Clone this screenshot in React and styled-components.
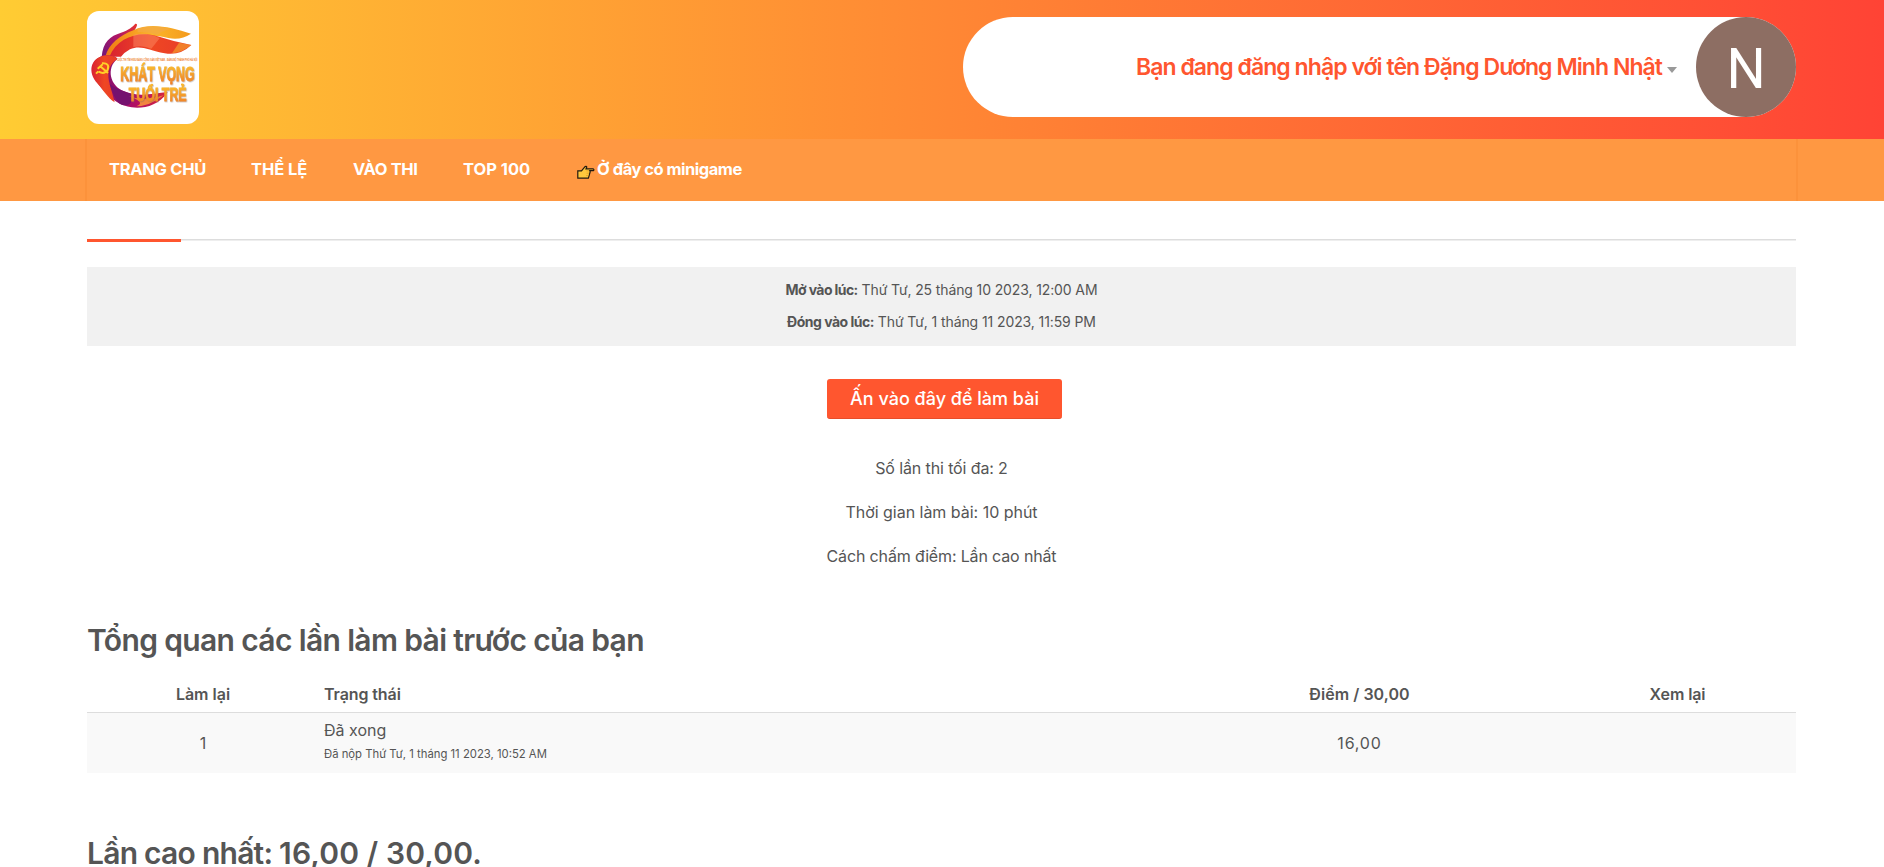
import React from "react";
import styled, { createGlobalStyle } from "styled-components";

const GlobalStyle = createGlobalStyle`
  * { box-sizing: border-box; }
  body {
    margin: 0;
    height: 867px;
    overflow: hidden;
    background: #fff;
    color: #555;
    font-family: Inter, "Open Sans", sans-serif;
    font-size: 16px;
  }
`;

const Header = styled.header`
  height: 139px;
  padding: 11px 88px 0 87px;
  display: flex;
  justify-content: space-between;
  align-items: flex-start;
  background: linear-gradient(90deg, #ffcc33, #ff4335);
`;

const LogoBox = styled.a`
  width: 112px;
  height: 113px;
  border-radius: 12px;
  background: #fff;
  svg { display: block; overflow: visible; }
`;

const UserPill = styled.div`
  width: 833px;
  height: 100px;
  margin-top: 6px;
  border-radius: 50px;
  background: #fff;
  display: flex;
  align-items: center;
  justify-content: flex-end;
`;

const UserName = styled.span`
  color: #ff562f;
  font-size: 23px;
  font-weight: 600;
  white-space: nowrap;
`;

const Caret = styled.span`
  margin: 6px 19px 0 5px;
  border: 5px solid transparent;
  border-top: 6px solid #999;
  border-bottom: 0;
`;

const Avatar = styled.div`
  width: 100px;
  height: 100px;
  border-radius: 50%;
  background: #8d6e63;
  color: #fff;
  font: 400 55px/104px Roboto, sans-serif;
  text-align: center;
`;

const Nav = styled.nav`
  height: 62px;
  padding: 0 86px 0 85px;
  background: #ff9842;
`;

const NavInner = styled.div`
  height: 100%;
  padding: 0 22px;
  display: flex;
  gap: 45px;
  border: solid #fc923b;
  border-width: 0 2px;
`;

const NavLink = styled.a`
  display: flex;
  color: #fff;
  font-size: 16.5px;
  font-weight: 700;
  line-height: 61px;
  white-space: nowrap;
  width: ${(p) => p.$width}px;
  letter-spacing: ${(p) => p.$track || 0}px;
  svg { flex: none; margin: 26px 2px 0 0; }
`;

const Main = styled.main`
  margin: 38px 88px 0 87px;
`;

const TabLine = styled.div`
  height: 3px;
  border-top: 1px solid #ddd;
  box-shadow: inset 0 1px #eee;
`;

const TabActive = styled.div`
  width: 94px;
  height: 3px;
  margin-top: -1px;
  background: #ff562f;
  position: relative;
`;

const Dates = styled.div`
  height: 79px;
  margin-top: 25px;
  padding-top: 7px;
  background: #f1f1f1;
  font-size: 14px;
  line-height: 32px;
  text-align: center;
`;

const Track = styled.span`
  letter-spacing: ${(p) => p.$by}px;
`;

const Label = styled.b`
  font-weight: 700;
  letter-spacing: ${(p) => p.$by}px;
`;

const StartButton = styled.button`
  display: block;
  width: 235px;
  height: 40px;
  margin: 33px 0 0 740px;
  padding: 0;
  border: 0;
  border-bottom: 1px solid #e64d2a;
  border-radius: 3px;
  background: #ff562f;
  color: #fff;
  font: 500 18px/39px Inter, sans-serif;
`;

const Facts = styled.div`
  margin-top: 27px;
  text-align: center;
  line-height: 44px;
`;

const Heading = styled.h3`
  margin: ${(p) => p.$top}px 0 0;
  font-size: 30px;
  font-weight: 600;
  line-height: 40px;
  white-space: nowrap;
`;

const Table = styled.div`
  margin-top: 17px;
`;

const TableRow = styled.div`
  display: grid;
  grid-template-columns: 232px 805px 471px 165px;
  align-items: center;
  height: ${(p) => (p.$head ? 36 : 60)}px;
  padding-bottom: ${(p) => (p.$head ? 2 : 0)}px;
  font-weight: ${(p) => (p.$head ? 600 : 400)};
  background: ${(p) => (p.$head ? "none" : "#f9f9f9")};
  border-bottom: ${(p) => (p.$head ? "1px solid #ddd" : "0")};
`;

const Cell = styled.div`
  text-align: ${(p) => p.$align || "center"};
  padding-left: ${(p) => (p.$align ? 5 : 0)}px;
`;

const State = styled.div`
  line-height: 22px;
`;

const Submitted = styled.div`
  font-size: 11.3px;
  line-height: 26px;
`;

const Pointer = () => (
  <svg width="18" height="15" viewBox="0 0 18 15">
    <path
      d="M.8 5.8H4.5L8 1.6Q9.5.8 9.8 2L9 3.9h7.3q1.3.8 0 1.8h-3.6l.5 1-.8 3-1 3.4H.8z"
      fill="#ffc83d"
      stroke="#221a10"
      strokeWidth="1.2"
    />
    <path d="M9.3 5.8h3M9.5 8.2h2.6M9 10.6h2.4" stroke="#e19b24" strokeWidth=".7" />
  </svg>
);

const Logo = () => (
  <svg width="112" height="113" viewBox="51 33 336 339">
    <defs>
      <linearGradient id="feather" x1="0" y1="1" x2="1" y2="0">
        <stop offset="0.1" stopColor="#7b1877" />
        <stop offset="0.55" stopColor="#b01765" />
        <stop offset="1" stopColor="#e9352b" />
      </linearGradient>
      <linearGradient id="gold" x1="0" x2="1">
        <stop offset="0" stopColor="#f07a13" />
        <stop offset="0.55" stopColor="#fbb62a" />
        <stop offset="1" stopColor="#f49a1c" />
      </linearGradient>
      <linearGradient id="wing" x1="0" x2="1">
        <stop offset="0" stopColor="#d92231" />
        <stop offset="0.5" stopColor="#ef4723" />
        <stop offset="1" stopColor="#e83b29" />
      </linearGradient>
      <linearGradient id="base" x1="0" x2="1">
        <stop offset="0" stopColor="#75116f" />
        <stop offset="0.5" stopColor="#ab0d69" />
        <stop offset="1" stopColor="#d8263c" />
      </linearGradient>
      <linearGradient id="letters" x1="0" y1="0" x2="0" y2="1">
        <stop offset="0.2" stopColor="#f9b52c" />
        <stop offset="1" stopColor="#ee7b28" />
      </linearGradient>
    </defs>
    <path d="M95 170C99 126 120 108 153 98C177 90 187 81 196 71Q205 70 198 83C190 101 163 116 145 129Q122 148 112 170Z" fill="url(#feather)" />
    <path d="M106 170C116 132 150 106 190 91C240 66 303 82 363 101Q332 122 295 114C228 98 176 107 132 170Z" fill="url(#gold)" />
    <path d="M203 86Q250 70 303 88Q278 91 261 105Q229 94 203 97Z" fill="#f3a943" opacity=".75" />
    <path d="M118 170C142 112 206 92 260 108Q309 124 364 135Q330 168 284 160C235 150 211 134 180 148Q162 158 153 170Z" fill="url(#wing)" />
    <path d="M190 104Q235 95 269 115L244 146Q218 134 190 141Z" fill="#ff9a72" opacity=".4" />
    <path d="M327 128L364 135Q337 158 306 160Z" fill="#f6a12b" opacity=".65" />
    <path d="M106 166Q137 166 142 177C108 204 119 258 163 274C203 292 248 281 293 276C265 319 220 326 185 322C152 318 122 297 100 270C53 220 57 177 106 166Z" fill="url(#base)" />
    <path d="M106 166Q137 166 142 177C112 196 112 225 119 252L134 307C112 292 103 274 83 251C51 217 61 173 106 166Z" fill="url(#wing)" />
    <path d="M119 252Q140 268 185 282Q190 322 157 315Q136 309 119 252Z" fill="#75116f" />
    <path d="M175 288Q218 305 281 286Q238 319 199 319Q230 307 175 288Z" fill="#ffa037" opacity=".8" />
    <path d="M96 190Q120 188 113 209Q103 225 86 215M78 221L85 214M90 198L114 219M83 206L98 193" fill="none" stroke="#ffcf28" strokeWidth="6" />
    <g fontFamily="Liberation Sans, sans-serif" fontWeight="700">
      <text x="140" y="184" fontSize="8" textLength="242" lengthAdjust="spacingAndGlyphs" fill="#ee7b28">
        CUỘC THI TÌM HIỂU ĐẢNG CỘNG SẢN VIỆT NAM - ĐẢNG BỘ THÀNH PHỐ HÀ NỘI
      </text>
      <g fill="url(#letters)" stroke="url(#letters)" strokeWidth="2.5" filter="drop-shadow(2px 2px 0 rgba(119,103,99,.45))">
        <text x="151" y="243" fontSize="58" textLength="223" lengthAdjust="spacingAndGlyphs">KHÁT VỌNG</text>
        <text x="176" y="302" fontSize="55" textLength="174" lengthAdjust="spacingAndGlyphs">TUỔI TRẺ</text>
      </g>
    </g>
  </svg>
);

export default function App() {
  return (
    <>
      <GlobalStyle />
      <Header>
        <LogoBox><Logo /></LogoBox>
        <UserPill>
          <UserName><Track $by={-0.94}>Bạn đang đăng nhập với tên Đặng Dương Minh Nhật</Track></UserName>
          <Caret />
          <Avatar>N</Avatar>
        </UserPill>
      </Header>
      <Nav>
        <NavInner>
          <NavLink $width={97} $track={-0.3}>TRANG CHỦ</NavLink>
          <NavLink $width={57} $track={-0.05}>THỂ LỆ</NavLink>
          <NavLink $width={65} $track={-0.4}>VÀO THI</NavLink>
          <NavLink $width={69} $track={0}>TOP 100</NavLink>
          <NavLink $width={166} $track={-0.5}><Pointer />Ở đây có minigame</NavLink>
        </NavInner>
      </Nav>
      <Main>
        <TabLine><TabActive /></TabLine>
        <Dates>
          <div><Label $by={-0.6}>Mở vào lúc:</Label> <Track $by={-0.12}>Thứ Tư, 25 tháng 10 2023, 12:00 AM</Track></div>
          <div><Label $by={-0.5}>Đóng vào lúc:</Label> <Track $by={-0.1}>Thứ Tư, 1 tháng 11 2023, 11:59 PM</Track></div>
        </Dates>
        <StartButton>Ấn vào đây để làm bài</StartButton>
        <Facts>
          <div><Track $by={-0.12}>Số lần thi tối đa: 2</Track></div>
          <div><Track $by={-0.02}>Thời gian làm bài: 10 phút</Track></div>
          <div><Track $by={-0.15}>Cách chấm điểm: Lần cao nhất</Track></div>
        </Facts>
        <Heading $top={42}><Track $by={-0.64}>Tổng quan các lần làm bài trước của bạn</Track></Heading>
        <Table>
          <TableRow $head>
            <Cell><Track $by={0}>Làm lại</Track></Cell>
            <Cell $align="left"><Track $by={-0.1}>Trạng thái</Track></Cell>
            <Cell><Track $by={0.05}>Điểm / 30,00</Track></Cell>
            <Cell><Track $by={-0.1}>Xem lại</Track></Cell>
          </TableRow>
          <TableRow>
            <Cell>1</Cell>
            <Cell $align="left">
              <State>Đã xong</State>
              <Submitted>Đã nộp Thứ Tư, 1 tháng 11 2023, 10:52 AM</Submitted>
            </Cell>
            <Cell><Track $by={0.8}>16,00</Track></Cell>
            <Cell />
          </TableRow>
        </Table>
        <Heading $top={60}><Track $by={-0.75}>Lần cao nhất: </Track><Track $by={0.15}>16,00 / 30,00.</Track></Heading>
      </Main>
    </>
  );
}
